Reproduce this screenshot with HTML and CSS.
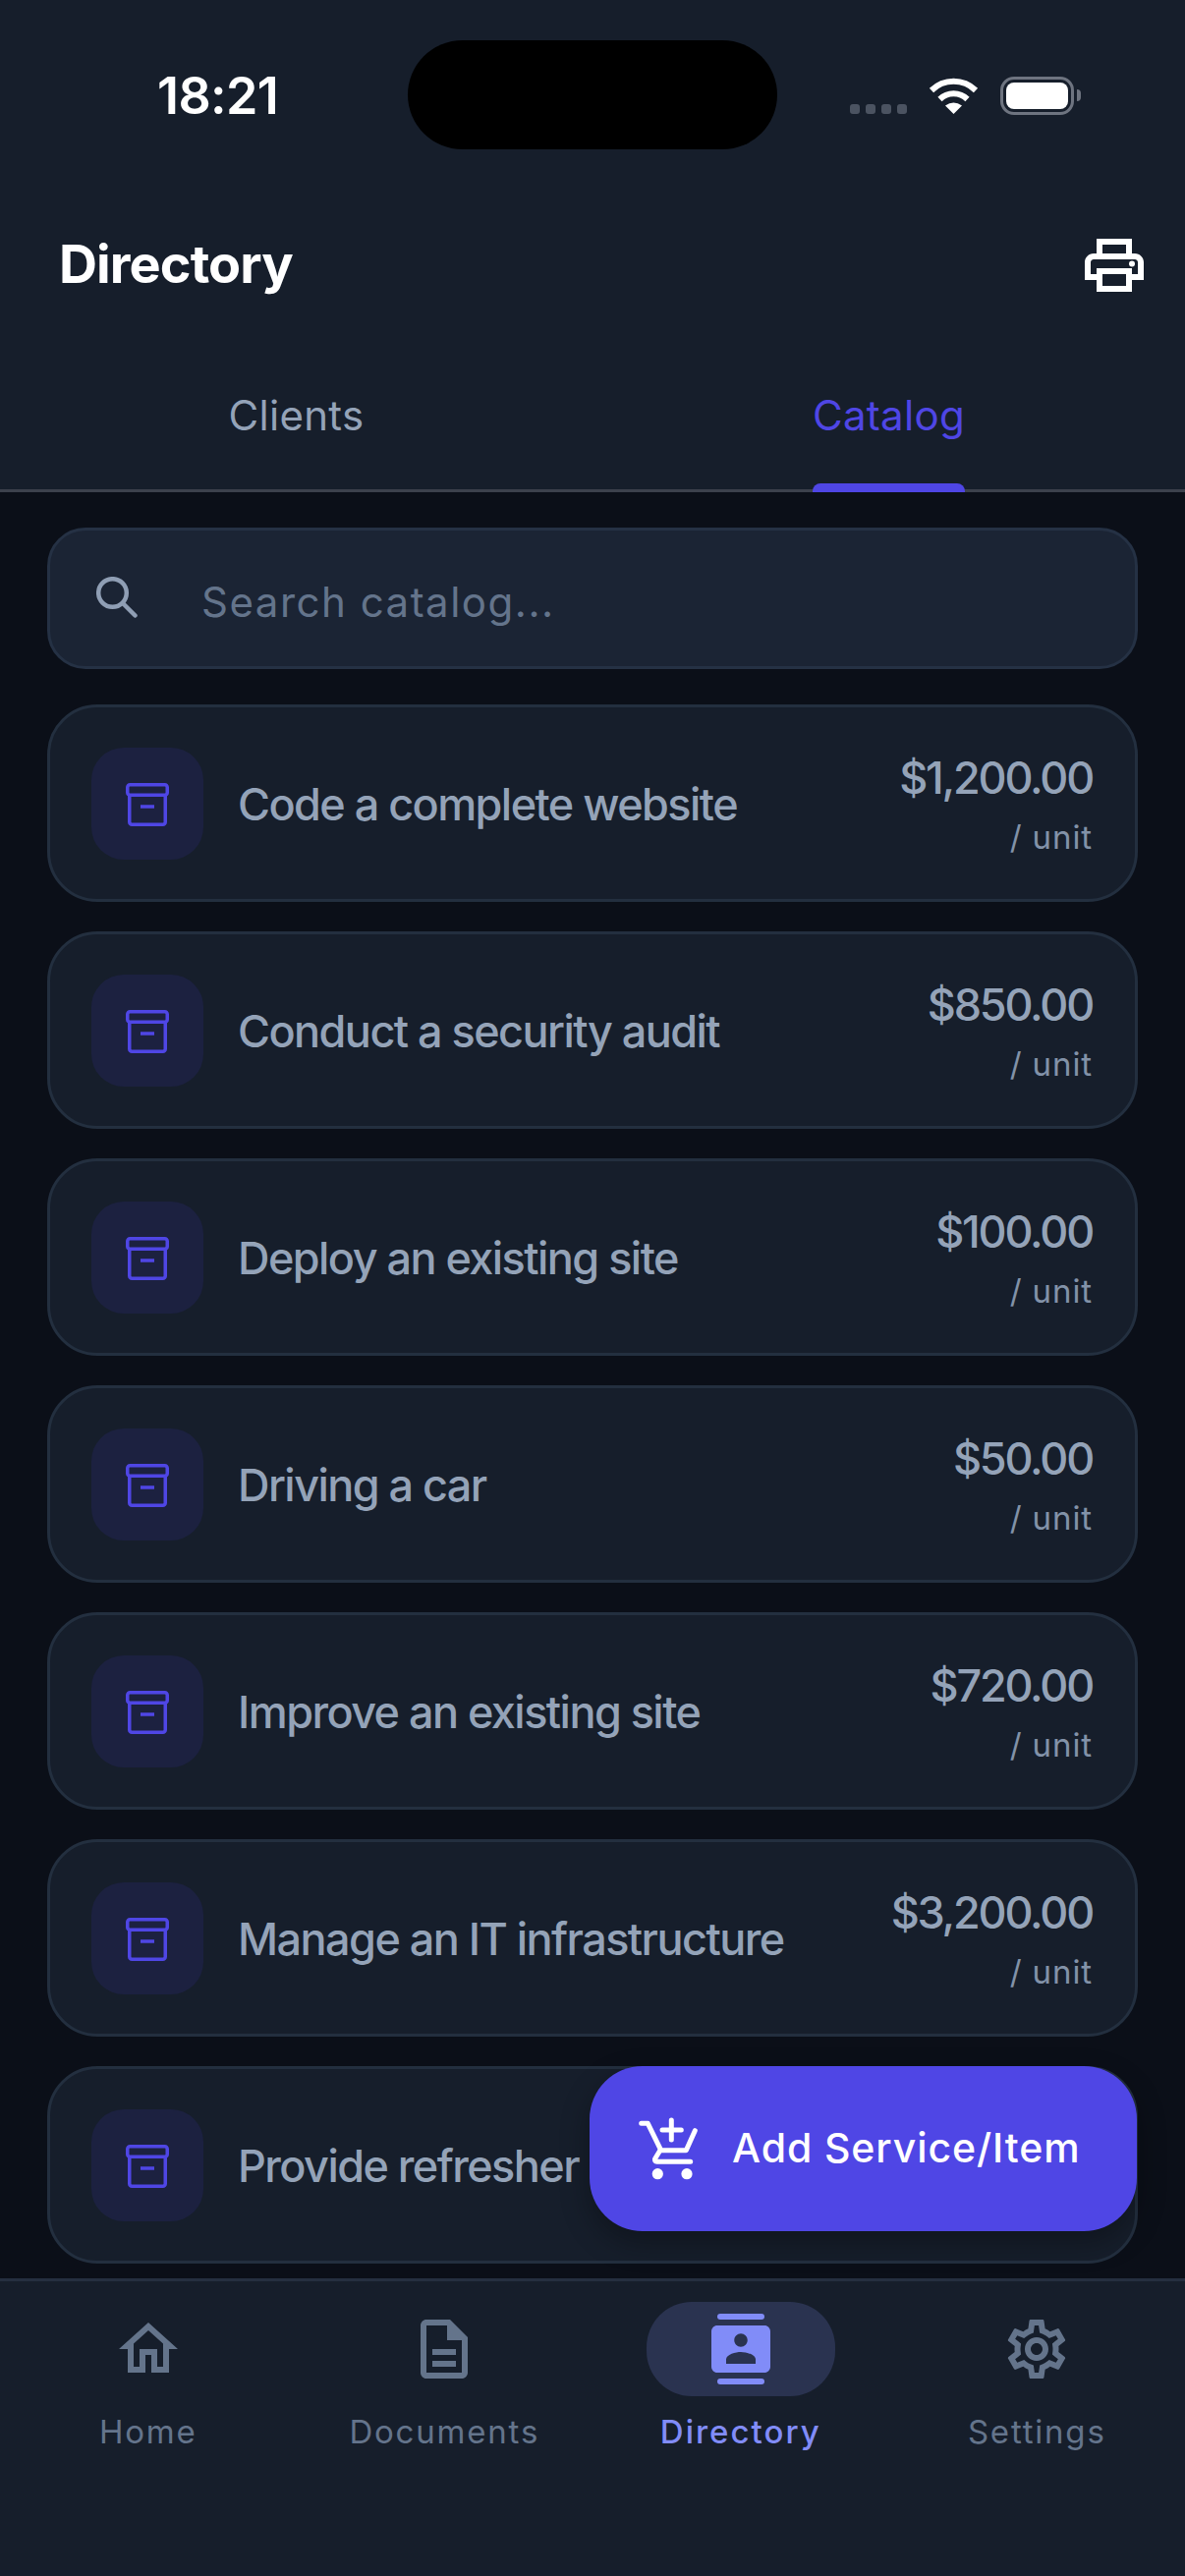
FILE: index.html
```html
<!DOCTYPE html>
<html lang="en">
<head>
  <meta charset="UTF-8">
  <meta name="viewport" content="width=device-width, initial-scale=1.0">
  <title>Directory</title>
  <link rel="stylesheet" href="styles.css">
</head>
<body>

  <div class="page">
    <header class="top">
      <div class="status-bar">
        <span class="time">18:21</span>
        <div class="island"></div>
        <div class="status-icons">
          <div class="signal"><i></i><i></i><i></i><i></i></div>
          <svg class="wifi" width="51" height="37" viewBox="0 0 51 37">
            <path d="M3 13A32 32 0 0 1 48 13M11.5 22A20 20 0 0 1 39.5 22" fill="none" stroke="#fff" stroke-width="6"/>
            <path d="M25.5 37L17 28.500Q25.500 22.500 34 28.500Z" fill="#fff"/>
          </svg>
          <div class="battery"><div class="battery-fill"></div></div>
          <div class="battery-nub"></div>
        </div>
      </div>

      <div class="title-row">
        <h1>Directory</h1>
        <svg class="print" width="72" height="72" viewBox="0 0 24 24" fill="#fff">
          <path d="M19 8h-1V3H6v5H5c-1.660 0-3 1.340-3 3v6h4v4h12v-4h4v-6c0-1.660-1.340-3-3-3zM8 5h8v3H8V5zm8 12v2H8v-4h8v2zm2-2v-2H6v2H4v-4c0-.55.45-1 1-1h14c.55 0 1 .45 1 1v4h-2z"/>
          <circle cx="18" cy="11.500" r="1"/>
        </svg>
      </div>

      <nav class="tabs">
        <div class="tab"><span>Clients</span></div>
        <div class="tab active"><span>Catalog</span></div>
      </nav>
    </header>

    <main class="content">
      <div class="search">
        <svg width="42" height="42" viewBox="0 0 42 42" fill="none" stroke="#8f9eb4" stroke-width="4.500" stroke-linecap="round">
          <circle cx="16.500" cy="16.500" r="14.300"/>
          <path d="M27 27L39.500 39.500"/>
        </svg>
        <span class="placeholder">Search catalog...</span>
      </div>

      <div class="card">
        <div class="card-icon"><svg width="48" height="48" viewBox="0 0 48 48" fill="none" stroke="#4f46e5" stroke-width="3.500"><rect x="3.750" y="4.750" width="40.500" height="10.500" rx="2.500"/><path d="M5.750 15V42.750a2.500 2.500 0 0 0 2.500 2.500H39.750a2.500 2.500 0 0 0 2.500-2.500V15M17 27H31"/></svg></div>
        <div class="card-name">Code a complete website</div>
        <div class="card-price"><div class="price">$1,200.00</div><div class="unit">/ unit</div></div>
      </div>

      <div class="card">
        <div class="card-icon"><svg width="48" height="48" viewBox="0 0 48 48" fill="none" stroke="#4f46e5" stroke-width="3.500"><rect x="3.750" y="4.750" width="40.500" height="10.500" rx="2.500"/><path d="M5.750 15V42.750a2.500 2.500 0 0 0 2.500 2.500H39.750a2.500 2.500 0 0 0 2.500-2.500V15M17 27H31"/></svg></div>
        <div class="card-name">Conduct a security audit</div>
        <div class="card-price"><div class="price">$850.00</div><div class="unit">/ unit</div></div>
      </div>

      <div class="card">
        <div class="card-icon"><svg width="48" height="48" viewBox="0 0 48 48" fill="none" stroke="#4f46e5" stroke-width="3.500"><rect x="3.750" y="4.750" width="40.500" height="10.500" rx="2.500"/><path d="M5.750 15V42.750a2.500 2.500 0 0 0 2.500 2.500H39.750a2.500 2.500 0 0 0 2.500-2.500V15M17 27H31"/></svg></div>
        <div class="card-name">Deploy an existing site</div>
        <div class="card-price"><div class="price">$100.00</div><div class="unit">/ unit</div></div>
      </div>

      <div class="card">
        <div class="card-icon"><svg width="48" height="48" viewBox="0 0 48 48" fill="none" stroke="#4f46e5" stroke-width="3.500"><rect x="3.750" y="4.750" width="40.500" height="10.500" rx="2.500"/><path d="M5.750 15V42.750a2.500 2.500 0 0 0 2.500 2.500H39.750a2.500 2.500 0 0 0 2.500-2.500V15M17 27H31"/></svg></div>
        <div class="card-name">Driving a car</div>
        <div class="card-price"><div class="price">$50.00</div><div class="unit">/ unit</div></div>
      </div>

      <div class="card">
        <div class="card-icon"><svg width="48" height="48" viewBox="0 0 48 48" fill="none" stroke="#4f46e5" stroke-width="3.500"><rect x="3.750" y="4.750" width="40.500" height="10.500" rx="2.500"/><path d="M5.750 15V42.750a2.500 2.500 0 0 0 2.500 2.500H39.750a2.500 2.500 0 0 0 2.500-2.500V15M17 27H31"/></svg></div>
        <div class="card-name">Improve an existing site</div>
        <div class="card-price"><div class="price">$720.00</div><div class="unit">/ unit</div></div>
      </div>

      <div class="card">
        <div class="card-icon"><svg width="48" height="48" viewBox="0 0 48 48" fill="none" stroke="#4f46e5" stroke-width="3.500"><rect x="3.750" y="4.750" width="40.500" height="10.500" rx="2.500"/><path d="M5.750 15V42.750a2.500 2.500 0 0 0 2.500 2.500H39.750a2.500 2.500 0 0 0 2.500-2.500V15M17 27H31"/></svg></div>
        <div class="card-name">Manage an IT infrastructure</div>
        <div class="card-price"><div class="price">$3,200.00</div><div class="unit">/ unit</div></div>
      </div>

      <div class="card">
        <div class="card-icon"><svg width="48" height="48" viewBox="0 0 48 48" fill="none" stroke="#4f46e5" stroke-width="3.500"><rect x="3.750" y="4.750" width="40.500" height="10.500" rx="2.500"/><path d="M5.750 15V42.750a2.500 2.500 0 0 0 2.500 2.500H39.750a2.500 2.500 0 0 0 2.500-2.500V15M17 27H31"/></svg></div>
        <div class="card-name">Provide refresher</div>
      </div>

      <button class="fab">
        <svg width="64" height="66" viewBox="0 0 64 66" fill="none" stroke="#fff" stroke-width="5" stroke-linecap="round" stroke-linejoin="round">
          <path d="M4.700 7.300H11.300L24.700 34.700H50.300L59.300 14.700"/>
          <path d="M23.500 35.300L18.500 43.500Q18 46.300 20.500 46.300H54.700"/>
          <path d="M35.300 4V24M26 14H45.300"/>
          <circle cx="21.300" cy="58.700" r="5.600" fill="#fff" stroke="none"/>
          <circle cx="51" cy="58.700" r="5.600" fill="#fff" stroke="none"/>
        </svg>
        <span>Add Service/Item</span>
      </button>
    </main>

    <nav class="bottom-nav">
      <div class="nav-item">
        <div class="nav-icon"><svg width="72" height="72" viewBox="0 0 24 24" fill="#64748b"><path d="M12 5.690l5 4.500V18h-2v-6H9v6H7v-7.810l5-4.500M12 3L2 12h3v8h6v-6h2v6h6v-8h3L12 3z"/></svg></div>
        <span>Home</span>
      </div>
      <div class="nav-item">
        <div class="nav-icon"><svg width="72" height="72" viewBox="0 0 24 24" fill="#64748b"><path d="M8 16h8v2H8zm0-4h8v2H8zm6-10H6c-1.100 0-2 .9-2 2v16c0 1.100.89 2 1.990 2H18c1.100 0 2-.9 2-2V8l-6-6zm4 18H6V4h7v5h5v11z"/></svg></div>
        <span>Documents</span>
      </div>
      <div class="nav-item active">
        <div class="nav-icon"><svg width="72" height="72" viewBox="0 0 24 24" fill="#818cf8"><rect x="4" y="0" width="16" height="2" rx="1"/><rect x="4" y="22" width="16" height="2" rx="1"/><path d="M20 4H4c-1.100 0-2 .9-2 2v12c0 1.100.9 2 2 2h16c1.100 0 2-.9 2-2V6c0-1.100-.9-2-2-2zm-8 2.750c1.240 0 2.250 1.010 2.250 2.250s-1.010 2.250-2.250 2.250S9.750 10.240 9.750 9 10.760 6.750 12 6.750zM17 17H7v-1.500c0-1.670 3.330-2.500 5-2.500s5 .83 5 2.500V17z"/></svg></div>
        <span>Directory</span>
      </div>
      <div class="nav-item">
        <div class="nav-icon"><svg width="72" height="72" viewBox="0 0 24 24" fill="#64748b"><path d="M19.430 12.980c.04-.32.07-.64.07-.98 0-.34-.03-.66-.07-.98l2.110-1.650c.19-.15.24-.42.12-.64l-2-3.460c-.09-.16-.26-.25-.44-.25-.06 0-.12.01-.17.03l-2.490 1c-.52-.4-1.080-.73-1.690-.98l-.38-2.650C14.460 2.180 14.250 2 14 2h-4c-.25 0-.46.18-.49.42l-.38 2.650c-.61.25-1.170.59-1.690.98l-2.490-1c-.06-.02-.12-.03-.18-.03-.17 0-.34.09-.43.25l-2 3.460c-.13.22-.07.49.12.64l2.110 1.650c-.04.32-.07.65-.07.98 0 .33.03.66.07.98l-2.110 1.650c-.19.15-.24.42-.12.64l2 3.460c.09.16.26.25.44.25.06 0 .12-.01.17-.03l2.490-1c.52.4 1.080.73 1.690.98l.38 2.650c.03.24.24.42.49.42h4c.25 0 .46-.18.49-.42l.38-2.650c.61-.25 1.170-.59 1.690-.98l2.490 1c.06.02.12.03.18.03.17 0 .34-.09.43-.25l2-3.460c.12-.22.07-.49-.12-.64l-2.110-1.650zm-1.980-1.710c.04.31.05.52.05.73 0 .21-.02.43-.05.73l-.14 1.130.89.7 1.080.84-.7 1.210-1.270-.51-1.040-.42-.9.68c-.43.32-.84.56-1.250.73l-1.060.43-.16 1.130-.2 1.350h-1.400l-.19-1.350-.16-1.130-1.060-.43c-.43-.18-.83-.41-1.230-.71l-.91-.7-1.060.43-1.270.51-.7-1.210 1.080-.84.89-.7-.14-1.130c-.03-.31-.05-.54-.05-.74s.02-.43.05-.73l.14-1.130-.89-.7-1.080-.84.7-1.210 1.270.51 1.040.42.9-.68c.43-.32.84-.56 1.250-.73l1.060-.43.16-1.130.2-1.350h1.390l.19 1.350.16 1.130 1.060.43c.43.18.83.41 1.230.71l.91.7 1.060-.43 1.270-.51.7 1.210-1.070.85-.89.7.14 1.130zM12 8c-2.210 0-4 1.790-4 4s1.790 4 4 4 4-1.790 4-4-1.790-4-4-4zm0 6c-1.100 0-2-.9-2-2s.9-2 2-2 2 .9 2 2-.9 2-2 2z"/></svg></div>
        <span>Settings</span>
      </div>
    </nav>
  </div>

</body>
</html>
```

FILE: styles.css
```css
* {
  box-sizing: border-box;
}

body {
  margin: 0;
  padding: 0;
  background-color: #0b0f18;
  font-family: Inter, "Noto Sans", sans-serif;
}

.page {
  width: 1206px;
  height: 2622px;
  display: flex;
  flex-direction: column;
  overflow: hidden;
}

/* Header */
.top {
  background-color: #161e2b;
}

.status-bar {
  position: relative;
  height: 234px;
  padding: 67px 106px 0 160px;
  display: flex;
  justify-content: space-between;
  align-items: flex-start;
}

.time {
  color: #fff;
  font-size: 52px;
  line-height: 62px;
  font-weight: 600;
  letter-spacing: -0.6px;
}

.island {
  position: absolute;
  left: 415px;
  top: 41px;
  width: 376px;
  height: 111px;
  border-radius: 56px;
  background-color: #000;
}

.status-icons {
  display: flex;
  align-items: flex-end;
  margin-top: 11px;
  height: 39px;
}

.signal {
  display: flex;
  gap: 6px;
  margin-right: 22px;
  margin-bottom: 1px;
}

.signal i {
  width: 10px;
  height: 10px;
  border-radius: 3px;
  background-color: #4b5361;
}

.wifi {
  margin-right: 22px;
  margin-bottom: 1px;
}

.battery {
  width: 75px;
  height: 39px;
  padding: 3px;
  border: 3px solid #6e7480;
  border-radius: 14px;
}

.battery-fill {
  width: 100%;
  height: 100%;
  border-radius: 8px;
  background-color: #fff;
}

.battery-nub {
  width: 4px;
  height: 12px;
  margin: 0 0 14px 3px;
  border-radius: 0 6px 6px 0;
  background-color: #6e7480;
}

.title-row {
  height: 72px;
  padding: 0 36px 0 60px;
  display: flex;
  justify-content: space-between;
  align-items: center;
}

h1 {
  margin: -4px 0 0;
  color: #fff;
  font-size: 54px;
  font-weight: 700;
  letter-spacing: -0.9px;
}

.tabs {
  height: 195px;
  display: flex;
  border-bottom: 3px solid #3c414c;
}

.tab {
  flex: 1;
  padding-top: 89px;
  text-align: center;
  color: #94a3b8;
  font-size: 42px;
  line-height: 56px;
  letter-spacing: 0.3px;
}

.tab span {
  position: relative;
  display: inline-block;
}

.tab.active {
  color: #4f46e5;
}

.tab.active span::after {
  content: "";
  position: absolute;
  left: 0;
  right: 0;
  top: 97px;
  height: 9px;
  border-radius: 8px 8px 0 0;
  background-color: #4f46e5;
}

/* Catalog list */
.content {
  position: relative;
  flex: 1;
  padding: 36px 48px 0;
  display: flex;
  flex-direction: column;
  gap: 30px;
  overflow: hidden;
}

.search {
  height: 144px;
  flex-shrink: 0;
  margin-bottom: 6px;
  padding: 0 45px 0 47px;
  display: flex;
  align-items: center;
  gap: 65px;
  background-color: #1b2434;
  border: 3px solid #253144;
  border-radius: 39px;
}

.search svg {
  margin-top: -2px;
}

.placeholder {
  margin-top: 7px;
  color: #64748b;
  font-size: 42px;
  letter-spacing: 1.500px;
}

.card {
  height: 201px;
  flex-shrink: 0;
  padding: 0 43px 0 42px;
  display: flex;
  align-items: center;
  gap: 35px;
  background-color: #161e2b;
  border: 3px solid #232f3f;
  border-radius: 51px;
}

.card-icon {
  width: 114px;
  height: 114px;
  flex-shrink: 0;
  display: flex;
  align-items: center;
  justify-content: center;
  background-color: #1c2140;
  border-radius: 33px;
}

.card-icon svg {
  display: block;
}

.card-name {
  flex: 1;
  margin-top: 2px;
  color: #94a3b8;
  font-size: 45px;
  font-weight: 500;
  letter-spacing: -1.550px;
}

.card-price {
  text-align: right;
}

.price {
  color: #94a3b8;
  font-size: 45px;
  line-height: 56px;
  font-weight: 500;
  letter-spacing: -2.200px;
}

.unit {
  margin-top: 12px;
  color: #8292a8;
  font-size: 33px;
  line-height: 40px;
  letter-spacing: 0.9px;
}

.fab {
  position: absolute;
  right: 49px;
  bottom: 48px;
  width: 557px;
  height: 168px;
  padding: 0 0 0 48px;
  display: flex;
  align-items: center;
  gap: 33px;
  border: none;
  border-radius: 54px;
  background-color: #4f46e5;
  box-shadow: 0 12px 30px rgba(0, 0, 0, 0.3);
  color: #fff;
  font-family: inherit;
  font-size: 41px;
  font-weight: 500;
  letter-spacing: 0.9px;
}

.fab span {
  margin-top: -2px;
}

/* Bottom nav */
.bottom-nav {
  height: 303px;
  padding-top: 21px;
  display: grid;
  grid-template-columns: repeat(4, 1fr);
  background-color: #161e2b;
  border-top: 3px solid #252f40;
}

.nav-item {
  display: flex;
  flex-direction: column;
  align-items: center;
  color: #64748b;
  font-size: 33px;
  line-height: 40px;
  letter-spacing: 1.800px;
}

.nav-icon {
  width: 192px;
  height: 96px;
  margin-bottom: 16px;
  display: flex;
  align-items: center;
  justify-content: center;
  border-radius: 46px;
}

.nav-item.active {
  color: #818cf8;
  font-weight: 500;
  letter-spacing: 2px;
}

.nav-item.active .nav-icon {
  background-color: #2a3350;
}
```
